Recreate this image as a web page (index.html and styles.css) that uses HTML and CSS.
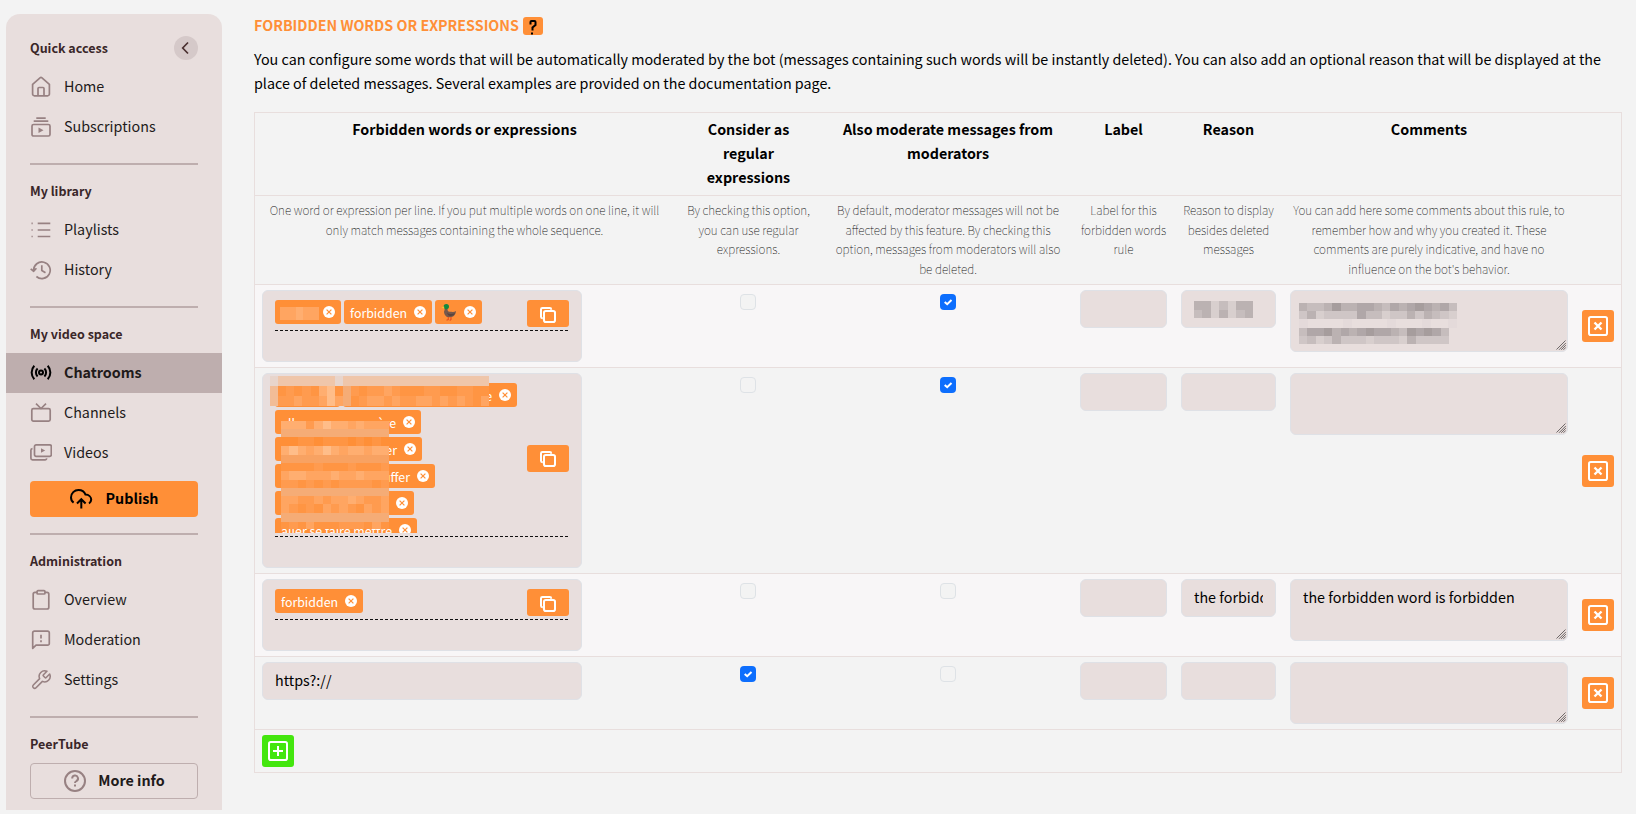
FILE: index.html
```html
<!DOCTYPE html>
<html lang="en">
<head>
<meta charset="utf-8">
<title>Forbidden words or expressions</title>
<link rel="stylesheet" href="styles.css">
</head>
<body>
<svg class="defs" width="0" height="0">
  <symbol id="copy" viewBox="0 0 16 16"><rect x="4" y="4" width="11" height="11" rx="1.8" fill="none" stroke="#fff" stroke-width="2"/><path d="M2.8 11.2H2.400A1.400 1.400 0 0 1 1 9.800V2.400A1.400 1.400 0 0 1 2.400 1h7.400a1.400 1.400 0 0 1 1.400 1.400v.4" fill="none" stroke="#fff" stroke-width="2"/></symbol>
  <symbol id="del" viewBox="0 0 20 20"><rect x="1" y="1" width="18" height="18" rx="1.8" fill="none" stroke="#fff" stroke-width="2"/><path d="M6.500 6.500l7 7M13.500 6.500l-7 7" stroke="#fff" stroke-width="2.4"/></symbol>
  <symbol id="x" viewBox="0 0 12 12"><circle cx="6" cy="6" r="6" fill="#fff"/><path d="M3.600 3.600l4.800 4.800M8.400 3.600L3.600 8.400" stroke="#ff8f37" stroke-width="1.2"/></symbol>
  <symbol id="grip" viewBox="0 0 10 10"><path d="M.5 9.500l9-9M3 9.800L9.800 3M5.200 9.800l4.600-4.600M7.400 9.800l2.400-2.400" stroke="#6f6868" stroke-width="1" fill="none"/></symbol>
</svg>
<div class="page">
  <aside class="menu">
    <div class="heading first"><span>Quick access</span>
      <span class="toggle"><svg width="24" height="24" viewBox="0 0 24 24"><path d="M14 6.500L8.700 12l5.300 5.500" fill="none" stroke="#4a3030" stroke-width="1.700"/></svg></span></div>
    <div class="item"><svg class="ico" viewBox="0 0 22 22"><path d="M2.600 8.300L10 1.800a1.500 1.500 0 0 1 2 0l7.400 6.500V18a1.800 1.800 0 0 1-1.800 1.800H4.400A1.800 1.800 0 0 1 2.600 18z"/><path d="M8 19.800v-7.300a1 1 0 0 1 1-1h4a1 1 0 0 1 1 1v7.300"/></svg>Home</div>
    <div class="item"><svg class="ico" viewBox="0 0 22 22"><path d="M6.300 2.200h9.400M3.700 5.200h14.600"/><rect x="2" y="8.500" width="18" height="11.500" rx="1.600"/><path class="solid" d="M8.500 11.500l5 2.700-5 2.700z"/></svg>Subscriptions</div>
    <hr>
    <div class="heading">My library</div>
    <div class="item"><svg class="ico" viewBox="0 0 22 22"><path d="M7.700 4.300h12.600M7.700 11h12.600M7.700 17.500h12.600M1.500 4.300h1.200M1.500 11h1.200M1.500 17.500h1.200"/></svg>Playlists</div>
    <div class="item"><svg class="ico" viewBox="0 0 22 22"><path d="M3.600 11.300A8.300 8.300 0 1 1 6.400 17.500M.7 9.800l3 2.500 2.700-3M11.800 6.300v5.200l3.700 2.300"/></svg>History</div>
    <hr>
    <div class="heading">My video space</div>
    <div class="item active"><svg class="ico" viewBox="0 0 22 22"><circle cx="11" cy="10.500" r="2"/><path d="M7.600 6.500a5.600 5.600 0 0 0 0 8M14.400 6.500a5.600 5.600 0 0 1 0 8M4.300 3.800a9.800 9.800 0 0 0 0 13.400M17.700 3.800a9.800 9.800 0 0 1 0 13.400"/></svg>Chatrooms</div>
    <div class="item"><svg class="ico" viewBox="0 0 22 22"><rect x="1.800" y="6.700" width="18.400" height="12.500" rx="1.600"/><path d="M6 1.700l5 4.800 5-4.800"/></svg>Channels</div>
    <div class="item"><svg class="ico" viewBox="0 0 22 22"><rect x="4.500" y="2.800" width="16.800" height="11.500" rx="1.600"/><path d="M2.500 6.600A1.700 1.700 0 0 0 .9 8.300v7.900a1.600 1.600 0 0 0 1.600 1.600h12.700a1.700 1.700 0 0 0 1.600-1.400"/><path class="solid" d="M11 6.300l4.200 2.200-4.200 2.300z"/></svg>Videos</div>
    <div class="publish"><svg width="24" height="22" viewBox="0 0 24 22"><path d="M4.600 14.600A6.500 6.500 0 0 1 2 9.400 7.500 7.500 0 0 1 9.500 2c3.300 0 6 2 7 4.600 3.300.2 5.700 2.300 5.700 5a5 5 0 0 1-2.200 3.900M12.300 20.500V12M8 15.500l4.300-4.300 4.300 4.300" fill="none" stroke="#000" stroke-width="2"/></svg>Publish</div>
    <hr>
    <div class="heading">Administration</div>
    <div class="item"><svg class="ico" viewBox="0 0 22 22"><path d="M7.500 3.300H5A1.800 1.800 0 0 0 3.200 5.100v13.100A1.800 1.800 0 0 0 5 20h12a1.800 1.800 0 0 0 1.800-1.800V5.100A1.800 1.800 0 0 0 17 3.300h-2.500"/><rect x="7" y="1.700" width="8" height="3.300" rx="1"/></svg>Overview</div>
    <div class="item"><svg class="ico" viewBox="0 0 22 22"><path d="M2.700 19.300V3.800A1.700 1.700 0 0 1 4.400 2.100h13.200a1.700 1.700 0 0 1 1.700 1.700v10.600a1.700 1.700 0 0 1-1.700 1.700H6z"/><path d="M11 5.800v3.700M11 11.300v2"/></svg>Moderation</div>
    <div class="item"><svg class="ico" viewBox="0 0 24 24"><path d="M14.700 6.300a1 1 0 0 0 0 1.400l1.600 1.600a1 1 0 0 0 1.400 0l3.770-3.770a6 6 0 0 1-7.940 7.940l-6.910 6.910a2.120 2.120 0 0 1-3-3l6.910-6.910a6 6 0 0 1 7.940-7.940z"/></svg>Settings</div>
    <hr>
    <div class="heading">PeerTube</div>
    <div class="more"><svg class="ico" viewBox="0 0 22 22"><circle cx="11" cy="11" r="10"/><path d="M8.200 8.500a2.900 2.900 0 1 1 4.300 2.500c-1 .6-1.500 1-1.500 2M11 14.600v2"/></svg>More info</div>
  </aside>

  <main class="content">
    <h2>Forbidden words or expressions <span class="help"><svg width="20" height="18" viewBox="0 0 20 18"><path d="M7.500 7.500V5a1 1 0 0 1 1-1h3a1 1 0 0 1 1 1v3L9.500 10.500V13.500M9 15.500v2" fill="none" stroke="#000" stroke-width="2"/></svg></span></h2>
    <p class="intro">You can configure some words that will be automatically moderated by the bot (messages containing such words will be instantly deleted). You can also add an optional reason that will be displayed at the place of deleted messages. Several examples are provided on the documentation page.</p>

    <div class="table">
      <div class="row head">
        <div>Forbidden words or expressions</div><div>Consider as regular expressions</div><div>Also moderate messages from moderators</div><div>Label</div><div>Reason</div><div>Comments</div><div></div>
      </div>
      <div class="row hints">
        <div>One word or expression per line. If you put multiple words on one line, it will only match messages containing the whole sequence.</div><div>By checking this option, you can use regular expressions.</div><div>By default, moderator messages will not be affected by this feature. By checking this option, messages from moderators will also be deleted.</div><div>Label for this forbidden words rule</div><div>Reason to display besides deleted messages</div><div>You can add here some comments about this rule, to remember how and why you created it. These comments are purely indicative, and have no influence on the bot's behavior.</div><div></div>
      </div>

      <div class="row r1 odd">
        <div><div class="field tagbox">
          <div class="tagline">
            <div class="tags">
              <span class="tag"><span class="w35"></span><svg class="x"><use href="#x"/></svg></span>
              <span class="tag">forbidden<svg class="x"><use href="#x"/></svg></span>
              <span class="tag"><svg class="duck" width="16" height="18" viewBox="0 0 16 18"><path d="M3 9c.5 4 3 5.500 6 5.300 3.500-.2 5.800-2.700 6-6.300-2 1.500-4.500.7-6.500.7-1.500 0-2-1.200-2-2.700L3.500 5.500C4 7 3 8 3 9z" fill="#75584c"/><path d="M6 9.500c2 2 5.500 2 8 .5-1 3-5 4-7 2z" fill="#59443d"/><circle cx="5.300" cy="3.600" r="2.700" fill="#16883f"/><path d="M3 3.300L.3 4.800l3 .6z" fill="#f6c431"/><path d="M7.300 14v2.500l-1.800.8M10 14v2.500l-1.300 1" stroke="#e8521f" stroke-width="1.200" fill="none"/></svg><svg class="x"><use href="#x"/></svg></span>
            </div>
            <span class="copy"><svg width="16" height="16"><use href="#copy"/></svg></span>
          </div>
          <div class="mosaic m1" data-w="39" data-h="13" data-rows="33433"></div>
        </div></div>
        <div class="mid"><i class="check"></i></div>
        <div class="mid"><i class="check on"><svg viewBox="0 0 16 16"><path d="M4.700 7.900l2.500 2.300 4.300-4.200"/></svg></i></div>
        <div><div class="field"></div></div>
        <div><div class="field"><div class="mosaic m2" data-w="59" data-h="8.5 8.5" data-rows="ccfdfcc dcfcfdc"></div></div></div>
        <div><div class="field area"><div class="mosaic m3" data-w="158 158 158 150 150" data-h="8 8 9 8 8" data-rows="cddcaccbbcdbcbabcbd ecfeeeebddfeececdef hgggghgggghggghggh dbbacbcbabbcdababd edfeceeefeeefceeee"></div><svg class="grip"><use href="#grip"/></svg></div></div>
        <div class="vc"><span class="del"><svg width="20" height="20"><use href="#del"/></svg></span></div>
      </div>

      <div class="row r2">
        <div><div class="field tagbox">
          <div class="tagline">
            <div class="tags clip">
              <span class="tag"><span class="w34"></span><svg class="x"><use href="#x"/></svg></span>
              <span class="tag"><span class="w143">e</span><svg class="x"><use href="#x"/></svg></span>
              <span class="tag"><span class="w115 split"><span>aller</span><span>ère</span></span><svg class="x"><use href="#x"/></svg></span>
              <span class="tag"><span class="w116">er</span><svg class="x"><use href="#x"/></svg></span>
              <span class="tag"><span class="w129">uffer</span><svg class="x"><use href="#x"/></svg></span>
              <span class="tag"><span class="w108"></span><svg class="x"><use href="#x"/></svg></span>
              <span class="tag"><span class="w111">aller se faire mettre</span><svg class="x"><use href="#x"/></svg></span>
            </div>
            <span class="copy"><svg width="16" height="16"><use href="#copy"/></svg></span>
          </div>
          <div class="mosaic m4" data-w="219" data-h="10 10 10" data-rows="qpppppppqpppppppppppppppppp s12121451r21223211122112211 s22322353r12332322332323213"></div>
          <div class="mosaic m5" data-w="108" data-h="8 8 9 9 8 8 9 8 8 8 9 9 7" data-rows="4442454434333 rrrrrrrrrrrrr 0011011101010 4543454344344 ttttttttttttt 1111211121112 3443334334333 2212121222212 rrrrrrrrrrrrr 3322323343223 3212132321323 rrrrrrrrrrrrr 1213111222131"></div>
        </div></div>
        <div class="mid"><i class="check"></i></div>
        <div class="mid"><i class="check on"><svg viewBox="0 0 16 16"><path d="M4.700 7.900l2.500 2.300 4.300-4.200"/></svg></i></div>
        <div><div class="field"></div></div>
        <div><div class="field"></div></div>
        <div><div class="field area"><svg class="grip"><use href="#grip"/></svg></div></div>
        <div class="vc"><span class="del"><svg width="20" height="20"><use href="#del"/></svg></span></div>
      </div>

      <div class="row r3 odd">
        <div><div class="field tagbox">
          <div class="tagline">
            <div class="tags"><span class="tag">forbidden<svg class="x"><use href="#x"/></svg></span></div>
            <span class="copy"><svg width="16" height="16"><use href="#copy"/></svg></span>
          </div>
        </div></div>
        <div class="mid"><i class="check"></i></div>
        <div class="mid"><i class="check"></i></div>
        <div><div class="field"></div></div>
        <div><div class="field"><div class="value">the forbidd</div></div></div>
        <div><div class="field area"><div class="value">the forbidden word is forbidden</div><svg class="grip"><use href="#grip"/></svg></div></div>
        <div class="vc"><span class="del"><svg width="20" height="20"><use href="#del"/></svg></span></div>
      </div>

      <div class="row r4">
        <div><div class="field wide"><div class="value">https?://</div></div></div>
        <div class="mid"><i class="check on"><svg viewBox="0 0 16 16"><path d="M4.700 7.900l2.500 2.300 4.300-4.200"/></svg></i></div>
        <div class="mid"><i class="check"></i></div>
        <div><div class="field"></div></div>
        <div><div class="field"></div></div>
        <div><div class="field area"><svg class="grip"><use href="#grip"/></svg></div></div>
        <div class="vc"><span class="del"><svg width="20" height="20"><use href="#del"/></svg></span></div>
      </div>

      <div class="row foot"><div><span class="add"><svg width="20" height="20" viewBox="0 0 20 20"><rect x="1" y="1" width="18" height="18" rx="1.800" fill="none" stroke="#fff" stroke-width="2"/><path d="M10 5v10M5 10h10" stroke="#fff" stroke-width="2"/></svg></span></div></div>
    </div>
  </main>
</div>
<script src="mosaic.js"></script>
</body>
</html>
```
FILE: mosaic.js
```js
// Fills each .mosaic with rows of colour cells described by its data attributes.
const shades = {
  0: '#ff8f37', 1: '#ff9543', 2: '#ff9b4f', 3: '#ffa561', 4: '#ffae70', 5: '#ffbd89',
  p: '#efc6aa', q: '#e8d5cc', r: '#f5ac76', s: '#f2bc96', t: '#f8a262',
  a: '#a69d9d', b: '#b0a7a8', c: '#bbb2b2', d: '#c6bdbd', e: '#cfc6c6', f: '#d8cfce',
  g: '#e8dedd', h: '#e4dada'
};
for (const box of document.querySelectorAll('.mosaic')) {
  const rows = box.dataset.rows.split(' ');
  const heights = box.dataset.h.split(' ').map(Number);
  const widths = box.dataset.w.split(' ').map(Number);
  rows.forEach((row, i) => {
    const line = document.createElement('div');
    line.className = 'mosaic-line';
    const width = widths.length === rows.length ? widths[i] : widths[0];
    line.style.width = width + 'px';
    line.style.height = heights[i] + 'px';
    for (const key of row) {
      const cell = document.createElement('i');
      cell.style.background = shades[key];
      line.append(cell);
    }
    box.append(line);
  });
}
```
FILE: styles.css
```css
* { box-sizing: border-box; }
body { margin: 0; background: #f3f3f3; color: #000; font: 14.32px/24px "Noto Sans CJK SC", "Open Sans", sans-serif; overflow: hidden; }
.defs { display: block; height: 0; }
.page { display: flex; height: 814px; padding: 14px 14px 4px 6px; }
.menu { width: 216px; flex: none; background: #e8dedd; border-radius: 14px 14px 0 0; padding-top: 22px; }
.heading { display: flex; align-items: center; justify-content: space-between; height: 24px; margin: 0 24px 7px; font-size: 12.5px; font-weight: 700; color: #3a2729; }
.toggle { width: 24px; height: 24px; border-radius: 50%; background: #d5c9c9; }
.toggle svg { display: block; }
.item { display: flex; align-items: center; gap: 12px; height: 40px; padding: 0 24px 2px; color: #211a1a; }
.ico { width: 22px; height: 22px; flex: none; fill: none; stroke: #978182; stroke-width: 1.7; stroke-linejoin: round; }
.item .ico { margin-top: 2px; }
.ico .solid { fill: #978182; stroke: none; }
.active { background: #beaeae; font-weight: 700; }
.active .ico { stroke: #000; stroke-width: 2; }
hr { height: 2px; border: 0; background: #beaeae; margin: 16px 24px 14px; }
.publish, .more { display: flex; align-items: center; justify-content: center; gap: 12px; height: 36px; margin: 8px 24px 0; padding-bottom: 2px; border-radius: 4px; background: #ff8f37; font-weight: 700; }
.publish { gap: 13px; padding-right: 1px; }
.publish svg { margin-top: 2px; }
.more { margin-top: 0; background: none; border: 1px solid #beaeae; color: #211a1a; padding-left: 1px; }
.more .ico { stroke-width: 2; margin-top: 2px; }

.content { flex: none; width: 1368px; margin-left: 32px; }
h2 { display: flex; align-items: center; gap: 5px; margin: -1px 0 10px; height: 24px; color: #ff8f37; font-size: 14.27px; font-weight: 700; text-transform: uppercase; }
.help { width: 20px; height: 18px; margin: 2px 0 0 -1px; border-radius: 3px; background: #ff8f37; }
.help svg { display: block; }
.intro { margin: 0 0 17px; }

.table { border: 1px solid #e8dedd; }
.row { display: grid; grid-template-columns: 419px 149px 250px 101px 109px 292px 46px; border-top: 1px solid #e8dedd; }
.row > div { padding: 5px 7px; }
.head { height: 82px; border-top: 0; font-size: 14.3px; font-weight: 700; text-align: center; }
.row.head > div { padding-top: 4px; }
.row.head > div:nth-child(2) { padding: 4px 20px; }
.hints { height: 89px; font-size: 11.78px; line-height: 19.5px; font-weight: 100; text-align: center; color: #111; }
.row.hints > div { padding: 4px 7px; }
.row.hints > div:nth-child(4), .row.hints > div:nth-child(5) { padding: 4px 4px; }
.r1, .r3 { height: 83px; }
.r2 { height: 206px; }
.r4 { height: 73px; }
.foot { height: 43px; }
.odd { background: #f8f6f7; }
.field { position: relative; height: 38px; padding: 5px 12px; border: 1px solid #dfe1e6; border-radius: 6px; background: #e8dedd; }
.area { height: 62px; padding: 5px 11px 5px 12px; }
.wide { width: 320px; }
.value { white-space: nowrap; overflow: hidden; }
.tagbox { width: 320px; height: 72px; padding: 9px 12px; }
.r2 .tagbox { height: 195px; }
.tagline { display: flex; align-items: center; justify-content: space-between; padding-bottom: 4px; background: repeating-linear-gradient(90deg, #111 0 3px, transparent 3px 5px) left bottom / 100% 1px no-repeat; }
.tags { display: flex; flex-wrap: wrap; gap: 3px; max-height: 150px; padding-bottom: 3px; }
.clip { width: 246px; overflow: hidden; padding-bottom: 0; }
.tag { display: flex; align-items: center; gap: 7px; height: 24px; padding: 2px 6px 0; border-radius: 3px; background: #ff8f37; color: #fff; font-size: 12.4px; white-space: nowrap; }
.tag > span { text-align: right; }
.tag > svg { margin-bottom: 2px; }
.tag > .split { display: flex; justify-content: space-between; }
.x { width: 12px; height: 12px; flex: none; }
.w34 { width: 34px; } .w35 { width: 35px; } .w108 { width: 108px; } .w111 { width: 111px; }
.w115 { width: 115px; } .w116 { width: 116px; } .w129 { width: 129px; } .w143 { width: 143px; }
.copy { display: flex; align-items: center; justify-content: center; width: 42px; height: 27px; border-radius: 3px; background: #ff8f37; padding-top: 2px; }
.mid { text-align: center; }
.check { display: block; width: 16px; height: 16px; margin: 4px auto 0; border: 1px solid #dee2e6; border-radius: 4px; background: #f3f3f3; }
.mid:nth-child(2) .check { margin-left: 59px; }
.on { border: 0; background: #0d6efd; }
.on svg { display: block; fill: none; stroke: #fff; stroke-width: 2; }
.vc { display: flex; align-items: center; }
.del, .add { display: flex; align-items: center; justify-content: center; width: 32px; height: 32px; border-radius: 3px; background: #ff8f37; }
.add { background: #43e60e; }
.grip { position: absolute; right: 1px; bottom: 1px; width: 10px; height: 10px; }
.mosaic { position: absolute; }
.mosaic-line { display: flex; }
.mosaic-line i { flex: 1; }
.m1 { left: 17px; top: 16px; }
.m2 { left: 12px; top: 10px; }
.m3 { left: 8px; top: 12px; }
.m4 { left: 7px; top: 2px; }
.m5 { left: 18px; top: 47px; }
```
